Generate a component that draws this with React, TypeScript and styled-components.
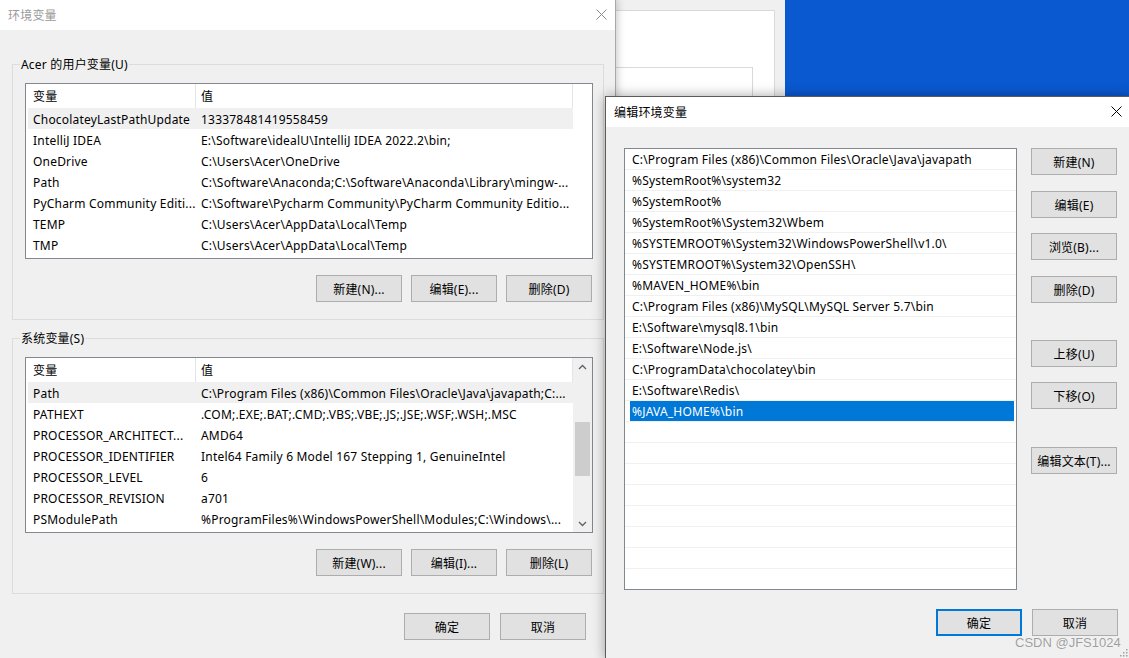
import React from "react";
import styled, { createGlobalStyle } from "styled-components";

const GlobalStyle = createGlobalStyle`
  html, body {
    margin: 0;
    padding: 0;
  }
  body {
    font-family: "Noto Sans", "Noto Sans CJK SC", sans-serif;
    font-size: 12px;
    letter-spacing: 0.2px;
    color: #000;
  }
  * {
    box-sizing: border-box;
  }
`;

const userVars: [string, string][] = [
  ["ChocolateyLastPathUpdate", "133378481419558459"],
  ["IntelliJ IDEA", "E:\\Software\\idealU\\IntelliJ IDEA 2022.2\\bin;"],
  ["OneDrive", "C:\\Users\\Acer\\OneDrive"],
  ["Path", "C:\\Software\\Anaconda;C:\\Software\\Anaconda\\Library\\mingw-..."],
  ["PyCharm Community Editi...", "C:\\Software\\Pycharm Community\\PyCharm Community Editio..."],
  ["TEMP", "C:\\Users\\Acer\\AppData\\Local\\Temp"],
  ["TMP", "C:\\Users\\Acer\\AppData\\Local\\Temp"]
];

const systemVars: [string, string][] = [
  ["Path", "C:\\Program Files (x86)\\Common Files\\Oracle\\Java\\javapath;C:..."],
  ["PATHEXT", ".COM;.EXE;.BAT;.CMD;.VBS;.VBE;.JS;.JSE;.WSF;.WSH;.MSC"],
  ["PROCESSOR_ARCHITECT...", "AMD64"],
  ["PROCESSOR_IDENTIFIER", "Intel64 Family 6 Model 167 Stepping 1, GenuineIntel"],
  ["PROCESSOR_LEVEL", "6"],
  ["PROCESSOR_REVISION", "a701"],
  ["PSModulePath", "%ProgramFiles%\\WindowsPowerShell\\Modules;C:\\Windows\\..."]
];

const pathEntries = [
  "C:\\Program Files (x86)\\Common Files\\Oracle\\Java\\javapath",
  "%SystemRoot%\\system32",
  "%SystemRoot%",
  "%SystemRoot%\\System32\\Wbem",
  "%SYSTEMROOT%\\System32\\WindowsPowerShell\\v1.0\\",
  "%SYSTEMROOT%\\System32\\OpenSSH\\",
  "%MAVEN_HOME%\\bin",
  "C:\\Program Files (x86)\\MySQL\\MySQL Server 5.7\\bin",
  "E:\\Software\\mysql8.1\\bin",
  "E:\\Software\\Node.js\\",
  "C:\\ProgramData\\chocolatey\\bin",
  "E:\\Software\\Redis\\",
  "%JAVA_HOME%\\bin"
];

const sideButtons = [
  { label: "新建(N)", gap: 0 },
  { label: "编辑(E)", gap: 16 },
  { label: "浏览(B)...", gap: 15 },
  { label: "删除(D)", gap: 16 },
  { label: "上移(U)", gap: 37 },
  { label: "下移(O)", gap: 15 },
  { label: "编辑文本(T)...", gap: 38 }
];

function CloseIcon({ color }: { color: string }) {
  return (
    <svg width="11" height="11" viewBox="0 0 11 11">
      <path d="M0.5 0.5 L10.5 10.5 M10.5 0.5 L0.5 10.5" stroke={color} strokeWidth="1" />
    </svg>
  );
}

function Chevron({ up }: { up?: boolean }) {
  return (
    <svg width="9" height="6" viewBox="0 0 9 6">
      <polyline
        points={up ? "1,5 4.5,1.5 8,5" : "1,1 4.5,4.5 8,1"}
        fill="none"
        stroke="#606060"
        strokeWidth="1.3"
      />
    </svg>
  );
}

function VarList({
  rows,
  scroll
}: {
  rows: [string, string][];
  scroll?: boolean;
}) {
  return (
    <ListView>
      <ListMain>
        <HeaderRow>
          <HeaderCell>变量</HeaderCell>
          <HeaderCell>值</HeaderCell>
        </HeaderRow>
        {rows.map(([name, value], i) => (
          <VarRow key={name + i} $selected={i === 0}>
            <Cell>{name}</Cell>
            <Cell>{value}</Cell>
          </VarRow>
        ))}
      </ListMain>
      <Scrollbar $show={!!scroll}>
        {scroll && (
          <>
            <ScrollArrow>
              <Chevron up />
            </ScrollArrow>
            <ScrollTrack>
              <Thumb $offset={47} $size={54} />
            </ScrollTrack>
            <ScrollArrow>
              <Chevron />
            </ScrollArrow>
          </>
        )}
      </Scrollbar>
    </ListView>
  );
}

export default function App() {
  const emptyRows = Array.from({ length: 9 });

  return (
    <>
      <GlobalStyle />
      <Desktop>
        <BackWindow>
          <BackPanel>
            <BackInner />
          </BackPanel>
        </BackWindow>

        <EnvWindow>
          <TitleBar $active={false}>
            <span>环境变量</span>
            <CloseIcon color="#8a8a8a" />
          </TitleBar>
          <EnvBody>
            <Group $top={34}>
              <GroupLabel>Acer 的用户变量(U)</GroupLabel>
              <VarList rows={userVars} />
              <ButtonRow>
                <Button>新建(N)...</Button>
                <Button>编辑(E)...</Button>
                <Button>删除(D)</Button>
              </ButtonRow>
            </Group>
            <Group $top={18}>
              <GroupLabel>系统变量(S)</GroupLabel>
              <VarList rows={systemVars} scroll />
              <ButtonRow>
                <Button>新建(W)...</Button>
                <Button>编辑(I)...</Button>
                <Button>删除(L)</Button>
              </ButtonRow>
            </Group>
            <Footer $right={29}>
              <Button>确定</Button>
              <Button>取消</Button>
            </Footer>
          </EnvBody>
        </EnvWindow>

        <EditWindow>
          <TitleBar $active>
            <span>编辑环境变量</span>
            <CloseIcon color="#000" />
          </TitleBar>
          <EditBody>
            <EditMain>
              <PathList>
                {pathEntries.map((p, i) => (
                  <PathRow key={p}>
                    <PathText $selected={i === pathEntries.length - 1}>{p}</PathText>
                  </PathRow>
                ))}
                {emptyRows.map((_, i) => (
                  <PathRow key={"empty" + i}>
                    <PathText $selected={false} />
                  </PathRow>
                ))}
              </PathList>
              <SideColumn>
                {sideButtons.map((b) => (
                  <SideButton key={b.label} $gap={b.gap}>
                    {b.label}
                  </SideButton>
                ))}
              </SideColumn>
            </EditMain>
            <Footer $right={12}>
              <Button $default>确定</Button>
              <Button>取消</Button>
            </Footer>
          </EditBody>
          <Grip>
            <svg width="10" height="10" viewBox="0 0 10 10">
              {[
                [8, 2],
                [8, 5],
                [5, 5],
                [8, 8],
                [5, 8],
                [2, 8]
              ].map(([x, y]) => (
                <rect key={`${x}-${y}`} x={x} y={y} width="1.5" height="1.5" fill="#a0a0a0" />
              ))}
            </svg>
          </Grip>
        </EditWindow>

        <Watermark>CSDN @JFS1024</Watermark>
      </Desktop>
    </>
  );
}

const Desktop = styled.div`
  position: relative;
  width: 1129px;
  height: 658px;
  overflow: hidden;
  background: #0a59d1;
`;

const BackWindow = styled.div`
  position: absolute;
  left: 560px;
  top: 0;
  width: 225px;
  height: 96px;
  overflow: hidden;
  background: #f0f0f0;
  padding: 10px 10px 0 0;
`;

const BackPanel = styled.div`
  height: 200px;
  background: #fff;
  border: 1px solid #d9d9d9;
  padding: 56px 21px 0 0;
`;

const BackInner = styled.div`
  height: 100px;
  border: 1px solid #d9d9d9;
  border-left: none;
`;

const EnvWindow = styled.div`
  position: absolute;
  left: -1px;
  top: -1px;
  width: 617px;
  height: 661px;
  display: flex;
  flex-direction: column;
  background: #f0f0f0;
  border: 1px solid #a8a8a8;
  box-shadow: 0 0 9px rgba(0, 0, 0, 0.28);
`;

const EditWindow = styled.div`
  position: absolute;
  left: 605px;
  top: 96px;
  width: 526px;
  height: 564px;
  display: flex;
  flex-direction: column;
  background: #f0f0f0;
  border: 1px solid #5b5b5b;
  box-shadow: 0 0 12px rgba(0, 0, 0, 0.35);
`;

const TitleBar = styled.div<{ $active: boolean }>`
  flex: none;
  height: 30px;
  display: flex;
  align-items: center;
  justify-content: space-between;
  padding: 0 8px 1px 7px;
  background: #fff;
  color: ${(p) => (p.$active ? "#000" : "#999")};
  font-size: 12px;

  span {
    padding-left: 1px;
  }
`;

const EnvBody = styled.div`
  flex: 1;
  display: flex;
  flex-direction: column;
  padding-left: 12px;
`;

const Group = styled.div<{ $top: number }>`
  position: relative;
  width: 592px;
  margin-top: ${(p) => p.$top}px;
  border: 1px solid #dcdcdc;
  padding: 18px 10px 17px 12px;
`;

const GroupLabel = styled.span`
  position: absolute;
  left: 7px;
  top: -8px;
  padding: 0 1px;
  line-height: 16px;
  background: #f0f0f0;
`;

const ListView = styled.div`
  height: 176px;
  display: flex;
  border: 1px solid #828790;
  background: #fff;
`;

const ListMain = styled.div`
  flex: 1;
  min-width: 0;
  padding-left: 2px;
`;

const HeaderRow = styled.div`
  display: grid;
  grid-template-columns: 168px 1fr;
  height: 24px;
`;

const HeaderCell = styled.div`
  display: flex;
  align-items: center;
  padding-left: 5px;
  border-right: 1px solid #e5e5e5;
  white-space: nowrap;
`;

const VarRow = styled.div<{ $selected: boolean }>`
  display: grid;
  grid-template-columns: 168px 1fr;
  height: 21px;
  background: ${(p) => (p.$selected ? "#f0f0f0" : "transparent")};
`;

const Cell = styled.div`
  display: flex;
  align-items: center;
  padding: 1px 0 0 5px;
  white-space: nowrap;
  overflow: hidden;
`;

const Scrollbar = styled.div<{ $show: boolean }>`
  flex: none;
  width: 19px;
  display: flex;
  flex-direction: column;
  background: ${(p) => (p.$show ? "#f0f0f0" : "#fff")};
`;

const ScrollArrow = styled.div`
  flex: none;
  height: 17px;
  display: flex;
  align-items: center;
  justify-content: center;
`;

const ScrollTrack = styled.div`
  flex: 1;
  padding: 0 2px;
`;

const Thumb = styled.div<{ $offset: number; $size: number }>`
  margin-top: ${(p) => p.$offset}px;
  height: ${(p) => p.$size}px;
  background: #cdcdcd;
`;

const ButtonRow = styled.div`
  display: flex;
  justify-content: flex-end;
  gap: 9px;
  margin-top: 16px;
  padding-right: 1px;
`;

const Button = styled.button<{ $default?: boolean }>`
  width: 86px;
  height: 27px;
  padding: 0;
  font-family: inherit;
  font-size: 12px;
  letter-spacing: inherit;
  color: #000;
  background: #e1e1e1;
  border: ${(p) => (p.$default ? "2px solid #0078d7" : "1px solid #adadad")};
  border-radius: 0;
`;

const Footer = styled.div<{ $right: number }>`
  display: flex;
  justify-content: flex-end;
  gap: 10px;
  margin-top: 19px;
  padding-right: ${(p) => p.$right}px;
`;

const EditBody = styled.div`
  flex: 1;
  display: flex;
  flex-direction: column;
`;

const EditMain = styled.div`
  display: flex;
  gap: 14px;
  padding: 21px 0 0 18px;
`;

const PathList = styled.div`
  width: 393px;
  height: 442px;
  overflow: hidden;
  border: 1px solid #828790;
  background: #fff;
`;

const PathRow = styled.div`
  height: 21px;
  display: flex;
  border-bottom: 1px solid #f0f0f0;
  padding-right: 2px;
`;

const PathText = styled.div<{ $selected: boolean }>`
  flex: 1;
  display: flex;
  align-items: center;
  margin-left: 5px;
  padding: 1px 0 0 2px;
  white-space: nowrap;
  background: ${(p) => (p.$selected ? "#0078d7" : "transparent")};
  color: ${(p) => (p.$selected ? "#fff" : "#000")};
`;

const SideColumn = styled.div`
  display: flex;
  flex-direction: column;
`;

const SideButton = styled(Button)<{ $gap: number }>`
  margin-top: ${(p) => p.$gap}px;
`;

const Grip = styled.div`
  position: absolute;
  right: 2px;
  bottom: 2px;
  width: 10px;
  height: 10px;
  display: flex;
`;

const Watermark = styled.div`
  position: absolute;
  left: 1015px;
  top: 635px;
  font-family: "Liberation Sans", sans-serif;
  font-size: 13px;
  letter-spacing: 0;
  color: rgba(140, 140, 140, 0.85);
  text-shadow: 0 0 1px #fff;
`;
